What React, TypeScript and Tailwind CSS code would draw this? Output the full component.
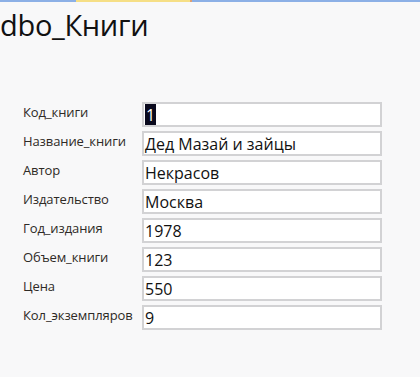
import React from "react";

type Field = { label: string; value: string };

const FIELDS: Field[] = [
  { label: "Код_книги", value: "1" },
  { label: "Название_книги", value: "Дед Мазай и зайцы" },
  { label: "Автор", value: "Некрасов" },
  { label: "Издательство", value: "Москва" },
  { label: "Год_издания", value: "1978" },
  { label: "Объем_книги", value: "123" },
  { label: "Цена", value: "550" },
  { label: "Кол_экземпляров", value: "9" },
];

function FieldRow({ field, first }: { field: Field; first: boolean }) {
  return (
    <div className="flex items-center h-[25px]">
      <span className="w-[142px] shrink-0 pl-[23px] -mt-[3px] text-[13px] text-[#2e2a26] font-medium tracking-[-0.1px] whitespace-nowrap">
        {field.label}
      </span>
      <div className="w-[240px] shrink-0 h-[25px] bg-white border-2 border-[#d2d2d4] flex items-center pl-[1px] text-[16px] text-[#111] leading-none">
        {first ? (
          <span className="bg-[#0a0a1e] text-white px-[1px] h-[21px] flex items-center">
            {field.value}
          </span>
        ) : (
          field.value
        )}
      </div>
    </div>
  );
}

export default function App() {
  return (
    <div
      className="w-[420px] h-[377px] bg-[#f8f8f9] overflow-hidden"
      style={{ fontFamily: '"Open Sans", "Liberation Sans", sans-serif' }}
    >
      {/* верхняя полоска */}
      <div className="flex h-[2px]">
        <div className="w-[76px] bg-[#8cb0e6]" />
        <div className="w-[114px] bg-[#f6df86]" />
        <div className="w-[2px] bg-[#e0a070]" />
        <div className="flex-1 bg-[#8cb0e6]" />
      </div>

      <h1 className="mt-[4px] text-[29px] leading-[38px] text-[#111] tracking-[-0.3px]">
        dbo_Книги
      </h1>

      <div className="mt-[58px] flex flex-col gap-[4px]">
        {FIELDS.map((f, i) => (
          <FieldRow key={f.label} field={f} first={i === 0} />
        ))}
      </div>
    </div>
  );
}
